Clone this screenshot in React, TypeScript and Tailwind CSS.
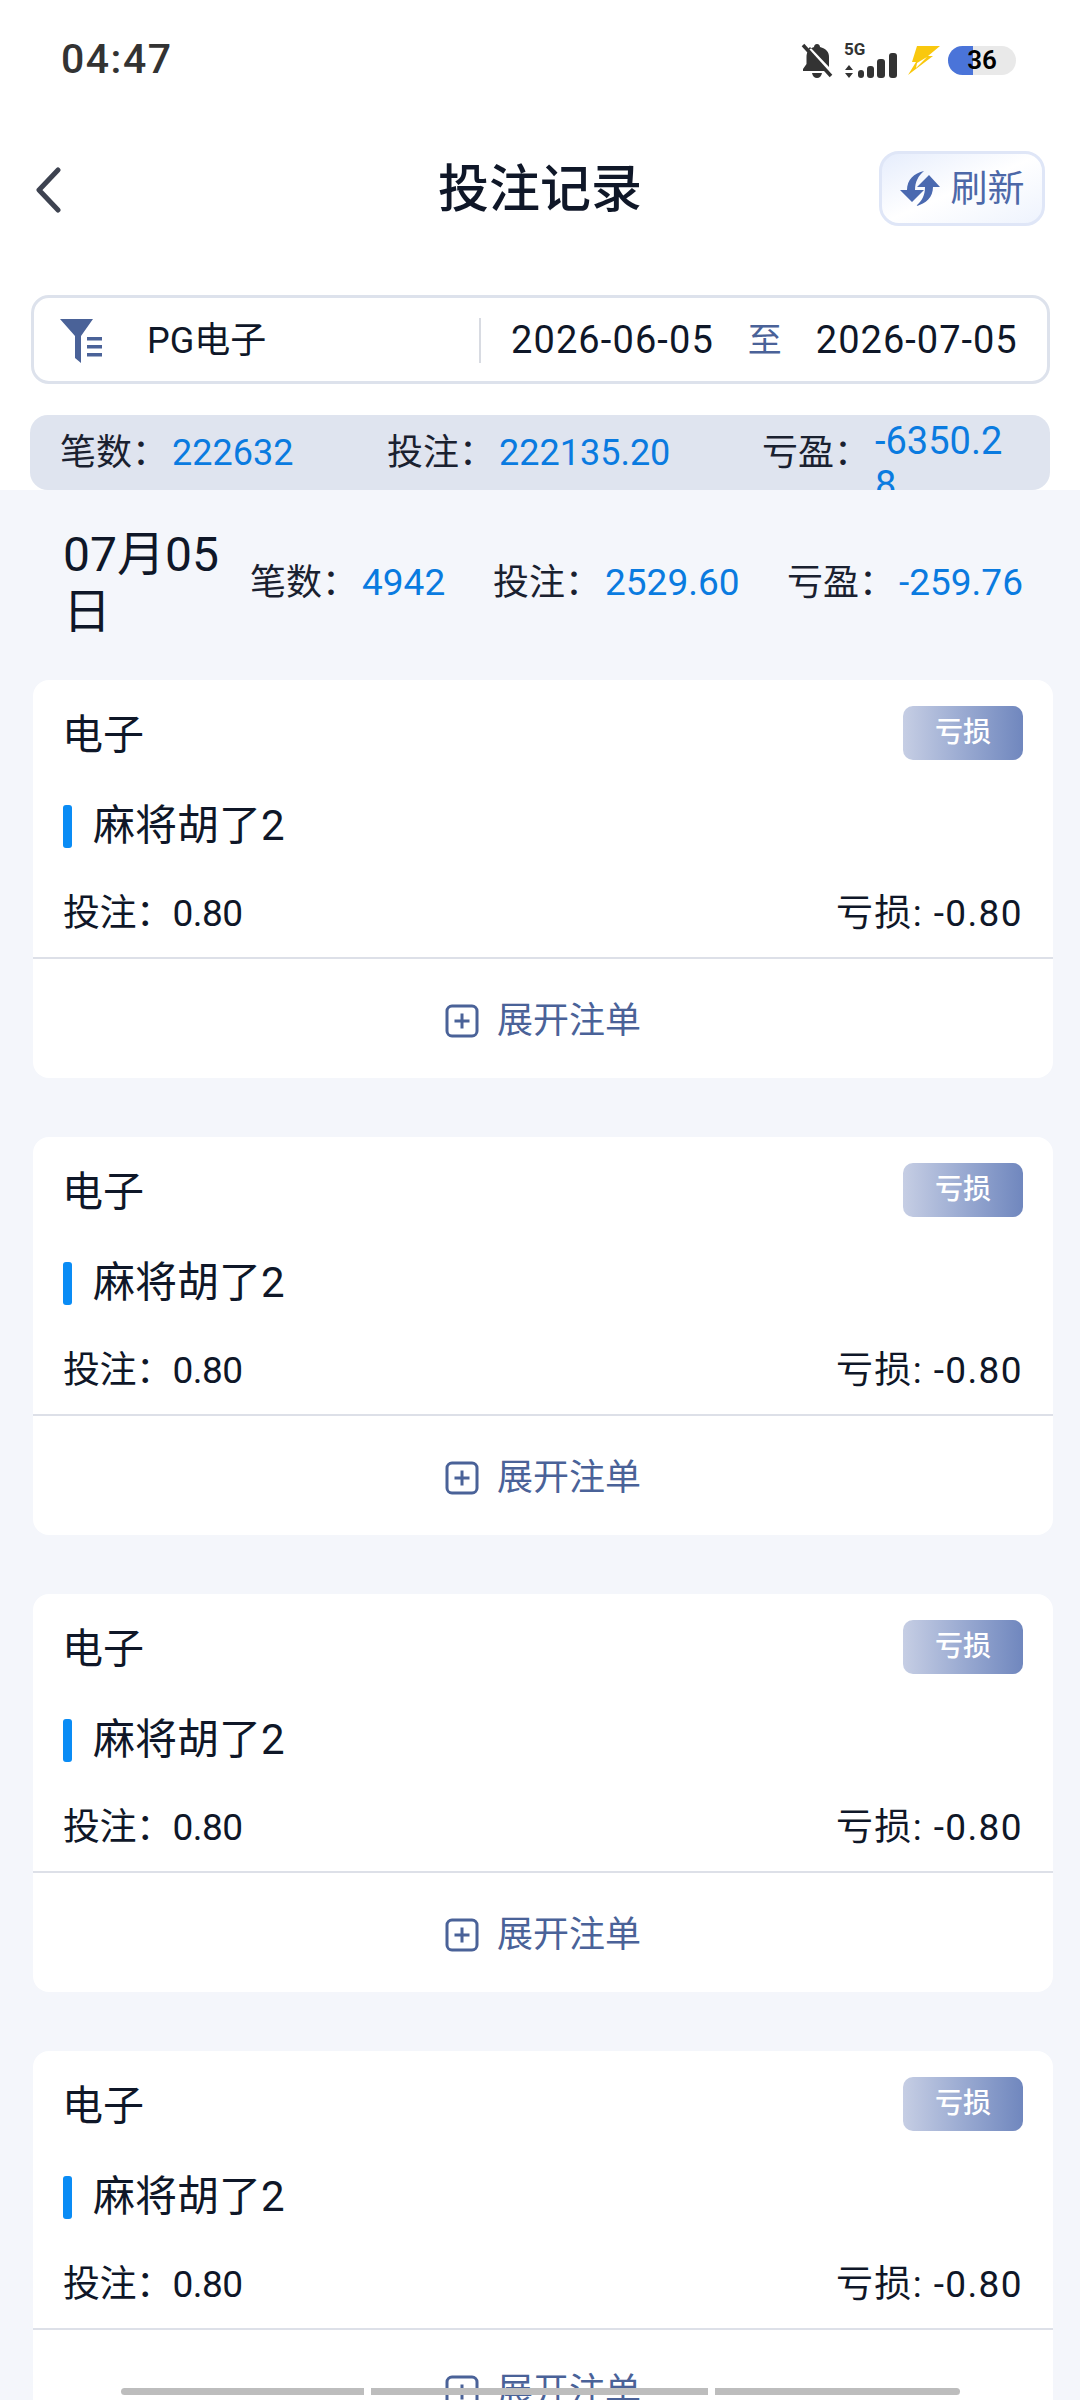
const FONT = "font-['Roboto','Noto_Sans_CJK_SC',sans-serif]";

function BellOffIcon() {
  return (
    <svg width="32" height="35" viewBox="0 0 32 35">
      <path d="M16 1c-2 0-3 1.500-3 3-5 1.500-7.500 5-7.500 10v7L2 26v2h25L7 6l2-2 19 20v-10c0-5-3-8.500-9-10 0-1.500-1-3-3-3z" fill="#333" />
      <path d="M11 30c.5 3 2.500 5 5 5s4.500-2 5-5z" fill="#333" />
      <path d="M2 2l28 31" stroke="#333" strokeWidth="3.500" />
    </svg>
  );
}

function SignalIcon() {
  return (
    <div className="relative w-[54px] h-[35px]">
      <span className="absolute left-0 top-0 font-['Roboto',sans-serif] text-[17px] leading-[13px] font-bold text-[#333]">5G</span>
      <div className="absolute bottom-0 left-0 flex items-end">
        <svg width="10" height="13" viewBox="0 0 10 13" fill="#333" className="mr-[4px]">
          <path d="M5 0l4 5H1zM5 13l4-5H1z" />
        </svg>
        <span className="w-[6px] h-[8px] rounded-[3px] bg-[#333] mr-[3px]" />
        <span className="w-[7px] h-[12px] rounded-[3px] bg-[#333] mr-[3px]" />
        <span className="w-[8px] h-[19px] rounded-[3px] bg-[#333] mr-[4px]" />
        <span className="w-[8px] h-[25px] rounded-[3px] bg-[#333]" />
      </div>
    </div>
  );
}

function BoltIcon() {
  return (
    <svg width="32" height="29" viewBox="0 0 32 29">
      <path d="M9 0h23L20 10h5L0 29l8-13H4z" fill="#f9c80e" />
      <path d="M9 17l10-6-11 11z" fill="#fff" />
    </svg>
  );
}

function RefreshIcon() {
  return (
    <svg width="40" height="37" viewBox="0 0 40 37" fill="#4a69b0">
      <path d="M24 1C14 3 7 10 7 20H0l12 12 12-12h-9c0-8 3-14 9-19z" />
      <path d="M16 36c10-2 17-9 17-19h7L29 5 17 17h8c0 8-3 14-9 19z" />
    </svg>
  );
}

function FilterIcon() {
  return (
    <svg width="44" height="46" viewBox="0 0 44 46" fill="#4a6298">
      <path d="M1 1h33L22 18v27l-6-5V18z" />
      <rect x="28" y="19" width="15" height="3.500" />
      <rect x="28" y="27" width="15" height="3.500" />
      <rect x="28" y="35" width="15" height="3.500" />
    </svg>
  );
}

function PlusBoxIcon() {
  return (
    <svg width="34" height="34" viewBox="0 0 34 34" fill="none" stroke="#4a6298" strokeWidth="3">
      <rect x="2" y="2" width="30" height="30" rx="5" />
      <path d="M17 9.500v15M9.500 17h15" />
    </svg>
  );
}

function Stat({ label, value, className, valueClass }: { label: string; value: string; className?: string; valueClass?: string }) {
  return (
    <div className={`flex items-center shrink-0 ${className ?? ""}`}>
      <span className="text-[36px] text-[#1a2130] w-[112px] shrink-0">{label}</span>
      <span className={`text-[#0a7be0] ${valueClass ?? "text-[37px]"}`}>{value}</span>
    </div>
  );
}

function BetCard() {
  return (
    <div className="bg-white rounded-[16px] h-[398px] flex flex-col shrink-0">
      <div className="flex justify-between items-start pl-[29px] pr-[30px] pt-[26px] h-[116px] shrink-0">
        <span className="text-[41px] leading-[58px] text-[#0f1728]">电子</span>
        <span className="w-[120px] h-[54px] rounded-[10px] bg-gradient-to-r from-[#c6cee4] to-[#7087be] text-white text-[28px] font-medium flex items-center justify-center">
          亏损
        </span>
      </div>
      <div className="flex items-center pl-[30px] h-[60px] shrink-0">
        <span className="w-[9px] h-[43px] rounded-[3px] bg-[#0a8cf5]" />
        <span className="ml-[21px] text-[42px] leading-[56px] text-[#0f1728]">麻将胡了2</span>
      </div>
      <div className="flex justify-between items-center px-[30px] text-[37px] text-[#0f1728] h-[74px] mt-[21px] mb-[6px] shrink-0">
        <span className="tracking-[-0.5px]">投注：0.80</span>
        <span className="tracking-[1.4px]">亏损: -0.80</span>
      </div>
      <div className="flex-1 border-t-2 border-[#dde0e8] flex items-center justify-center gap-[18px] text-[36px] text-[#4a6298] pt-[5px]">
        <PlusBoxIcon />
        <span>展开注单</span>
      </div>
    </div>
  );
}

export default function App() {
  return (
    <div className={`relative w-[1080px] h-[2400px] overflow-hidden bg-white flex flex-col ${FONT}`}>
      {/* Status bar */}
      <div className="h-[120px] shrink-0 flex items-center justify-between pl-[61px] pr-[64px]">
        <span className="text-[41px] font-medium text-[#333] tracking-[1.5px]">04:47</span>
        <div className="flex items-center">
          <BellOffIcon />
          <div className="ml-[11px]"><SignalIcon /></div>
          <div className="ml-[10px]"><BoltIcon /></div>
          <div className="relative w-[68px] h-[29px] rounded-full bg-[#e9e9e9] overflow-hidden flex items-center justify-center ml-[8px]">
            <span className="absolute left-0 top-0 bottom-0 w-[25px] bg-[#4a74d9]" />
            <span className="relative text-[26px] font-semibold text-black">36</span>
          </div>
        </div>
      </div>

      {/* Header */}
      <div className="h-[140px] shrink-0 flex items-center justify-between pl-[34px] pr-[35px] relative">
        <svg width="28" height="46" viewBox="0 0 28 46" fill="none" stroke="#3d4250" strokeWidth="5" strokeLinecap="round" strokeLinejoin="round">
          <path d="M24 3L5 23l19 20" />
        </svg>
        <span className="absolute left-0 right-0 text-center text-[51px] font-medium text-[#0f1728] pointer-events-none">投注记录</span>
        <div className="w-[166px] h-[75px] -mt-[3px] rounded-[20px] border-[3px] border-[#dfe6f7] bg-gradient-to-br from-[#e6edfc] via-white to-[#eef3fd] flex items-center justify-center gap-[11px]">
          <RefreshIcon />
          <span className="text-[37px] leading-[50px] text-[#4d68a8] mt-[2px]">刷新</span>
        </div>
      </div>

      {/* Filter box */}
      <div className="shrink-0 mt-[35px] ml-[31px] w-[1019px] h-[89px] rounded-[18px] border-[3px] border-[#dde2ec] flex items-center pl-[25px] pt-[2px] text-[36px] text-[#0f1728]">
        <FilterIcon />
        <span className="ml-[44px] w-[332px]">PG电子</span>
        <div className="w-[2px] h-[45px] bg-[#d8dbe2]" />
        <span className="ml-[30px] text-[38px] tracking-[1.1px]">2026-06-05</span>
        <span className="ml-[34px] text-[#4a6298] text-[34px]">至</span>
        <span className="ml-[34px] text-[38px] tracking-[1px]">2026-07-05</span>
      </div>

      {/* Total summary */}
      <div className="shrink-0 mt-[31px] ml-[30px] w-[1020px] h-[75px] rounded-[18px] bg-[#dfe4ef] flex items-center pl-[30px] pt-[1px] overflow-hidden">
        <Stat label="笔数：" value="222632" className="w-[327px]" valueClass="text-[36px]" />
        <Stat label="投注：" value="222135.20" className="w-[375px]" valueClass="text-[36px]" />
        <div className="flex items-start h-[75px]">
          <span className="text-[36px] text-[#1a2130] w-[113px] shrink-0 leading-[75px]">亏盈：</span>
          <span className="text-[38px] text-[#0a7be0] w-[135px] break-all leading-[44px] mt-[3px]">-6350.28</span>
        </div>
      </div>

      {/* Records */}
      <div className="flex-1 bg-[#f4f6fb] pl-[33px] pr-[27px] flex flex-col min-h-0">
        <div className="h-[190px] shrink-0 flex items-center pb-[4px]">
          <div className="w-[188px] shrink-0 ml-[30px] text-[48px] leading-[57px] text-[#0f1728] break-all pr-[10px]">07月05日</div>
          <Stat label="笔数：" value="4942" className="w-[243px] -ml-[1px]" />
          <Stat label="投注：" value="2529.60" className="w-[294px]" />
          <Stat label="亏盈：" value="-259.76" />
        </div>
        <div className="flex flex-col gap-[59px]">
          <BetCard />
          <BetCard />
          <BetCard />
          <BetCard />
        </div>
      </div>

      {/* Scroll overlay */}
      <div className="absolute left-[121px] top-[2388px] flex gap-[7px]">
        <span className="w-[243px] h-[7px] rounded-l-full bg-[#bdbdbd]" />
        <span className="w-[337px] h-[7px] bg-[#bdbdbd]" />
        <span className="w-[245px] h-[7px] rounded-r-full bg-[#bdbdbd]" />
      </div>
    </div>
  );
}
